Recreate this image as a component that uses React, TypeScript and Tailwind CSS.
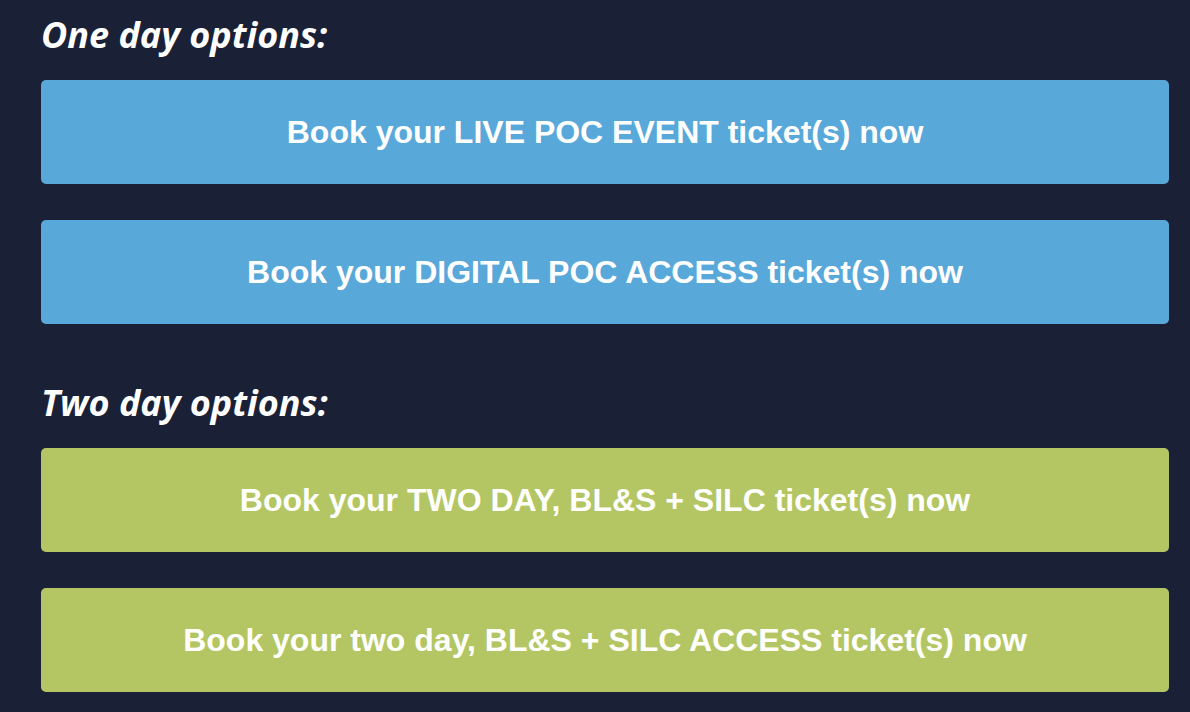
import React from 'react';

const groups = [
  {
    title: 'One day options:',
    color: 'bg-[#58a8da]',
    items: ['Book your LIVE POC EVENT ticket(s) now', 'Book your DIGITAL POC ACCESS ticket(s) now'],
  },
  {
    title: 'Two day options:',
    color: 'bg-[#b3c663]',
    items: ['Book your TWO DAY, BL&S + SILC ticket(s) now', 'Book your two day, BL&S + SILC ACCESS ticket(s) now'],
  },
];

export default function App() {
  return (
    <div className="min-h-[712px] w-[1190px] bg-[#1a2137] pl-[41px] pr-[21px] pt-[12px]">
      {groups.map((g, gi) => (
        <section key={g.title} className={gi > 0 ? 'mt-[56px]' : ''}>
          <h2 className="mb-[22px] font-['Open_Sans',sans-serif] text-[36px] font-bold italic leading-[46px] text-white">
            {g.title}
          </h2>
          <div className="flex flex-col gap-[36px]">
            {g.items.map((label) => (
              <a
                key={label}
                href="#"
                className={`flex h-[104px] items-center justify-center rounded-[5px] ${g.color} font-['Liberation_Sans',Arial,sans-serif] text-[32px] font-bold text-white`}
              >
                {label}
              </a>
            ))}
          </div>
        </section>
      ))}
    </div>
  );
}
